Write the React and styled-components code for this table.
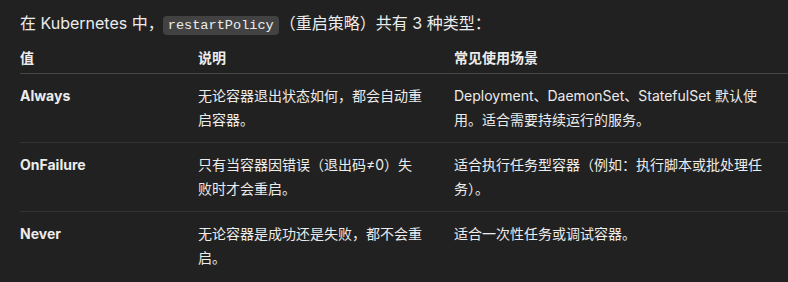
import React from 'react';
import styled, { createGlobalStyle } from 'styled-components';

const GlobalStyle = createGlobalStyle`
  html, body {
    margin: 0;
    padding: 0;
    background: #212121;
  }
  body {
    font-family: Inter, "Noto Sans CJK SC", sans-serif;
    color: #ececec;
  }
`;

const Wrapper = styled.div`
  width: 788px;
  height: 282px;
  overflow: hidden;
  padding-left: 20px;
  box-sizing: border-box;
`;

const Intro = styled.p`
  margin: 0;
  padding-top: 9px;
  font-size: 16px;
  line-height: 28px;
`;

const Code = styled.code`
  font-family: "Liberation Mono", "DejaVu Sans Mono", monospace;
  font-size: 13.6px;
  background: #424242;
  border-radius: 4px;
  padding: 2px 5px;
  margin: 0 1px 0 -1px;
`;

const Table = styled.table`
  border-collapse: collapse;
  margin-top: 6px;
  font-size: 14px;
  line-height: 24px;
  table-layout: fixed;
  width: 768px;
`;

const Col = styled.col`
  width: ${(p) => p.$w}px;
`;

const HeadCell = styled.th`
  box-sizing: border-box;
  text-align: left;
  font-weight: 700;
  padding: 0 24px 3px 0;
  border-bottom: 1px solid #474747;
`;

const Row = styled.tr`
  & + & td {
    border-top: 1px solid #323232;
  }
`;

const Cell = styled.td`
  box-sizing: border-box;
  vertical-align: top;
  padding: 10px ${(p) => p.$pr || 24}px 10px 0;
  font-weight: ${(p) => (p.$strong ? 700 : 400)};
`;

const rows = [
  {
    value: 'Always',
    desc: '无论容器退出状态如何，都会自动重启容器。',
    usage: 'Deployment、DaemonSet、StatefulSet 默认使用。适合需要持续运行的服务。',
  },
  {
    value: 'OnFailure',
    desc: '只有当容器因错误（退出码≠0）失败时才会重启。',
    usage: '适合执行任务型容器（例如：执行脚本或批处理任务）。',
  },
  {
    value: 'Never',
    desc: '无论容器是成功还是失败，都不会重启。',
    usage: '适合一次性任务或调试容器。',
  },
];

export default function App() {
  return (
    <Wrapper>
      <GlobalStyle />
      <Intro>
        在 Kubernetes 中，<Code>restartPolicy</Code>（重启策略）共有 3 种类型：
      </Intro>
      <Table>
        <colgroup>
          <Col $w={178} />
          <Col $w={256} />
          <Col $w={334} />
        </colgroup>
        <thead>
          <tr>
            <HeadCell>值</HeadCell>
            <HeadCell>说明</HeadCell>
            <HeadCell>常见使用场景</HeadCell>
          </tr>
        </thead>
        <tbody>
          {rows.map((r) => (
            <Row key={r.value}>
              <Cell $strong>{r.value}</Cell>
              <Cell $pr={31.5}>{r.desc}</Cell>
              <Cell>{r.usage}</Cell>
            </Row>
          ))}
        </tbody>
      </Table>
    </Wrapper>
  );
}
